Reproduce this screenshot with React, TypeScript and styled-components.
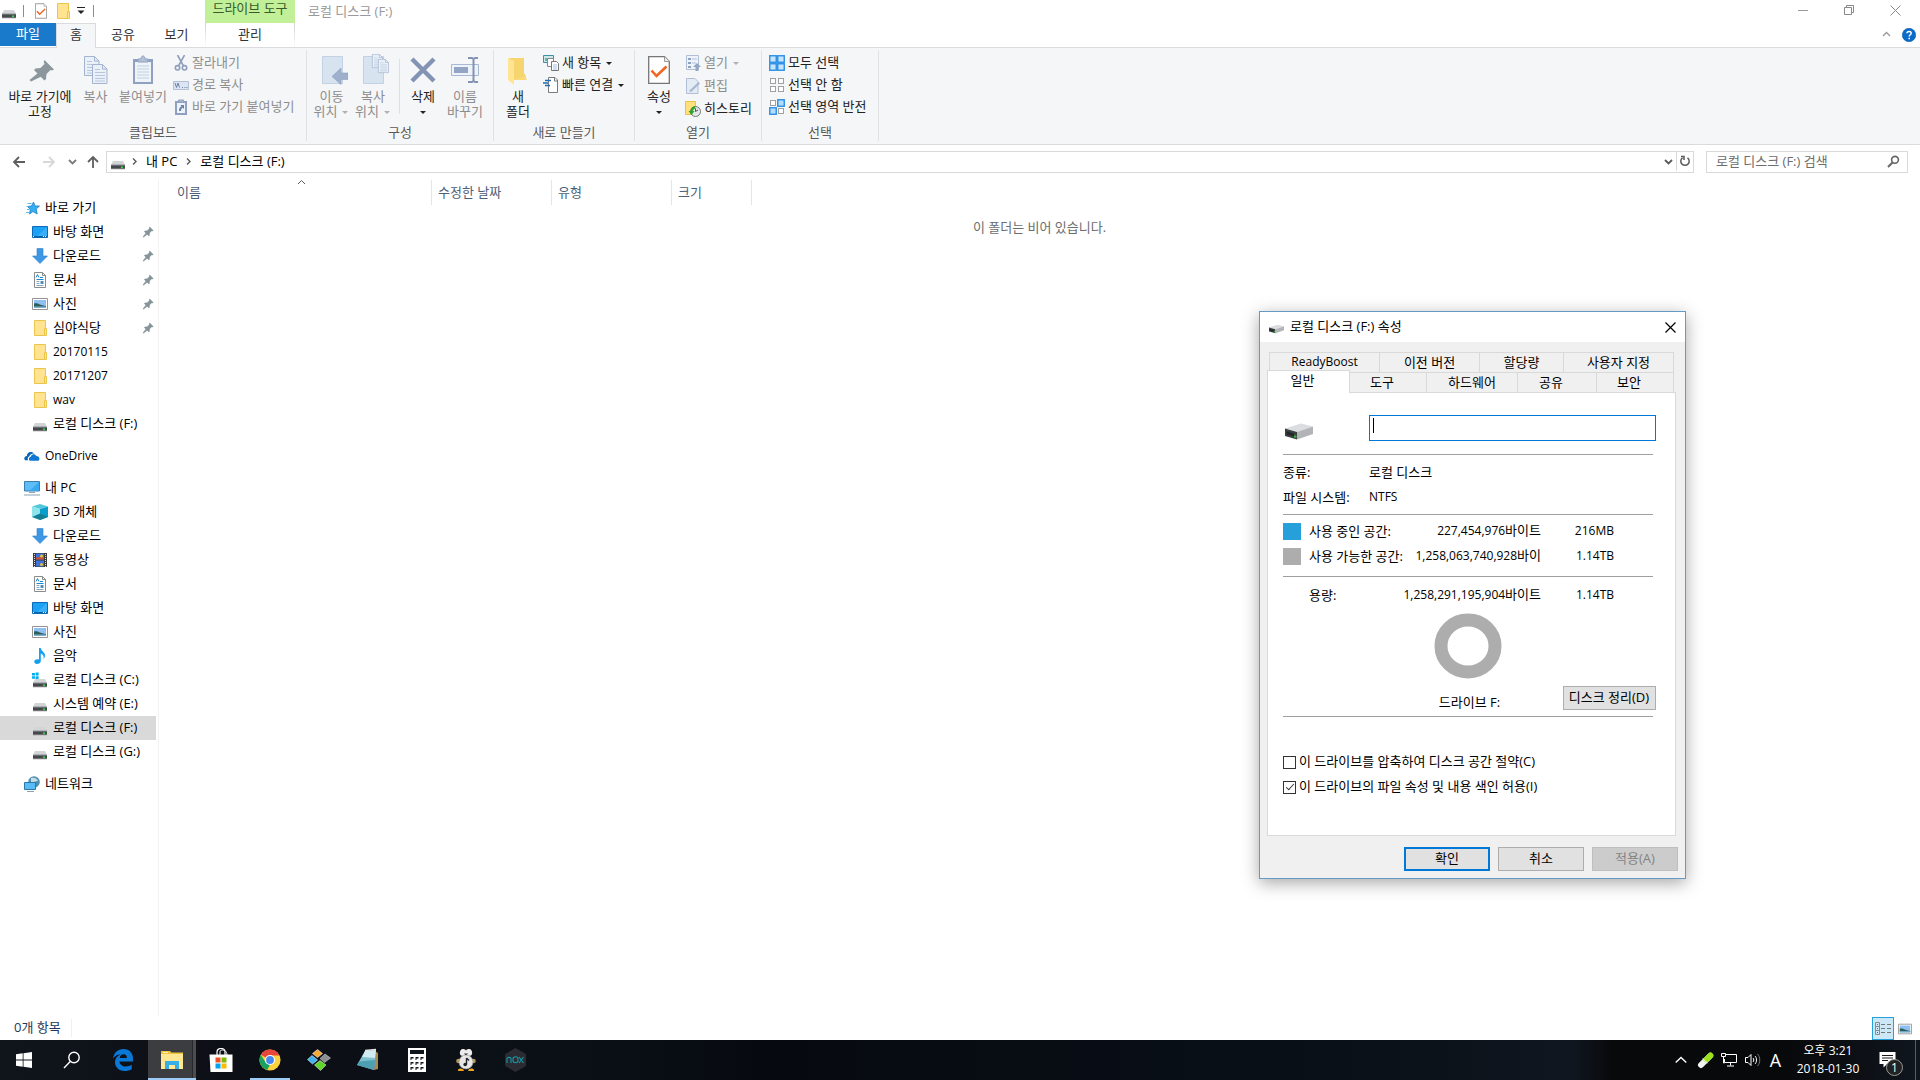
import React from "react";
import styled, { createGlobalStyle, css } from "styled-components";

const font = '"Open Sans", "Noto Sans CJK KR", sans-serif';

const Global = createGlobalStyle`
  *, *::before, *::after { box-sizing: border-box; }
  body { margin: 0; background: #fff; color: #000; font: 13px/16px ${font}; }
  button, input { font: inherit; color: inherit; }
  button { margin: 0; padding: 0; border: 0; background: none; white-space: nowrap; }
  svg { display: block; flex: none; }
`;

/* ---------- page ---------- */

const Desktop = styled.div`
  position: relative;
  min-height: 100vh;
  display: flex;
  flex-direction: column;
`;

const Explorer = styled.main`
  flex: 1;
  display: flex;
  flex-direction: column;
  background: #fff;
`;

/* ---------- title bar ---------- */

const TitleBar = styled.header`
  display: flex;
  height: 23px;
  padding-right: 2px;
`;

const QuickAccess = styled.div`
  width: 205px;
  display: flex;
  align-items: center;
  padding: 0 0 1px 1px;
`;

const QuickButton = styled.button<{ $w: number }>`
  width: ${(p) => p.$w}px;
  height: 20px;
  display: flex;
  align-items: center;
  justify-content: center;
`;

const QuickLine = styled.span`
  width: 1px;
  height: 12px;
  margin: 0 7px 1px 6px;
  background: #8c8c8c;
`;

const ContextTitle = styled.div`
  width: 90px;
  background: #c1f098;
  color: #3a5a2a;
  text-align: center;
`;

const WindowTitle = styled.h1`
  flex: 1;
  margin: 0;
  padding: 3px 0 0 13px;
  font-size: 13px;
  font-weight: 400;
  color: #999;
`;

const WindowButton = styled.button`
  width: 46px;
  height: 20px;
  display: flex;
  align-items: center;
  justify-content: center;
`;

/* ---------- ribbon tabs ---------- */

const TabRow = styled.nav`
  display: flex;
  height: 24px;
`;

const RibbonTab = styled.button<{ $w: number; $kind?: "file" | "active" | "context" }>`
  position: relative;
  width: ${(p) => p.$w}px;
  height: 24px;
  padding-bottom: 3px;
  color: #333;
  ${(p) => p.$kind === "file" && css`height: 23px; background: #1979ca; color: #fff;`}
  ${(p) =>
    p.$kind === "active" &&
    css`
      height: 25px;
      padding-bottom: 4px;
      background: #f5f6f7;
      border: 1px solid #dadbdc;
      border-bottom: 0;
      z-index: 1;
    `}
  ${(p) =>
    p.$kind === "context" &&
    css`
      margin-left: 2px;
      border: 1px solid;
      border-width: 0 1px;
      border-image: linear-gradient(#cfcfcf, #fff) 1;
    `}
`;

const TabTools = styled.div`
  margin-left: auto;
  display: flex;
  align-items: center;
  gap: 11px;
  padding: 0 4px 1px 0;
`;

/* ---------- ribbon ---------- */

const Ribbon = styled.section`
  display: flex;
  height: 98px;
  padding: 2px 0 3px;
  background: #f5f6f7;
  border: 1px solid #dadbdc;
  border-width: 1px 0;
`;

const Group = styled.div<{ $w: number }>`
  width: ${(p) => p.$w}px;
  display: flex;
  flex-direction: column;
  border-right: 1px solid #e1e2e3;
`;

const GroupBody = styled.div`
  flex: 1;
  display: flex;
  padding: 4px 0 0 4px;
`;

const GroupName = styled.div`
  height: 17px;
  text-align: center;
  color: #5a5a5a;
`;

const BigButton = styled.button<{ $w: number }>`
  width: ${(p) => p.$w}px;
  display: flex;
  flex-direction: column;
  align-items: center;
  justify-content: flex-start;
  gap: 3px;
  line-height: 15px;
  color: #222;
  &:disabled { color: #8d8d8d; }
`;

const BigText = styled.span`
  display: flex;
  flex-direction: column;
  align-items: center;
`;

const WithArrow = styled.span`
  display: flex;
  align-items: center;
  justify-content: center;
  gap: 4px;
  min-height: 15px;
`;

const SmallStack = styled.div<{ $pitch: number; $left: number }>`
  display: flex;
  flex-direction: column;
  margin-left: ${(p) => p.$left}px;
  > button { height: ${(p) => p.$pitch}px; padding-bottom: ${(p) => p.$pitch - 17}px; }
`;

const SmallButton = styled.button`
  display: flex;
  align-items: center;
  gap: 4px;
  color: #222;
  &:disabled { color: #8d8d8d; }
  > span { padding-bottom: 2px; margin-left: -1px; }
`;

const BodyLine = styled.span`
  width: 1px;
  height: 55px;
  margin: 5px 3px 0 5px;
  background: #dfe0e1;
`;

/* ---------- address row ---------- */

const AddressRow = styled.div`
  display: flex;
  align-items: center;
  height: 35px;
  padding: 0 12px 2px 4px;
`;

const NavButton = styled.button<{ $w: number }>`
  width: ${(p) => p.$w}px;
  height: 22px;
  display: flex;
  align-items: center;
  justify-content: center;
`;

const AddressBox = styled.div`
  flex: 1;
  height: 22px;
  display: flex;
  align-items: center;
  margin-left: 1px;
  padding-left: 3px;
  border: 1px solid #d9d9d9;
`;

const Crumb = styled.button`
  height: 20px;
  padding: 0 3px 2px;
`;

const Sep = styled.span`
  width: 17px;
  display: flex;
  justify-content: center;
`;

const AddressEnd = styled.div`
  margin-left: auto;
  display: flex;
  > button + button { border-left: 1px solid #d9d9d9; height: 20px; }
`;

const SearchBox = styled.label`
  width: 202px;
  height: 22px;
  display: flex;
  align-items: center;
  margin-left: 12px;
  padding: 0 7px 0 9px;
  border: 1px solid #d9d9d9;
`;

const SearchInput = styled.input`
  flex: 1;
  min-width: 0;
  height: 20px;
  padding: 0 0 2px;
  border: 0;
  outline: 0;
  background: none;
  &::placeholder { color: #6d6d6d; opacity: 1; }
`;

/* ---------- body ---------- */

const Body = styled.div`
  flex: 1;
  display: flex;
`;

const Sidebar = styled.nav`
  width: 159px;
  padding: 16px 2px 0 0;
  border-right: 1px solid #f2f2f2;
`;

const TreeGroup = styled.ul`
  margin: 0 0 8px;
  padding: 0;
  list-style: none;
`;

const TreeItem = styled.li``;

const TreeLink = styled.a<{ $depth: number; $on?: boolean }>`
  height: 24px;
  display: flex;
  align-items: center;
  gap: 5px;
  padding: 0 2px 0 ${(p) => (p.$depth ? 32 : 24)}px;
  color: #000;
  text-decoration: none;
  white-space: nowrap;
  background: ${(p) => (p.$on ? "#d9d9d9" : "transparent")};
  > span { flex: 1; height: 19px; }
`;

const LatinText = styled.span`
  font-size: 12px;
`;

const FilePane = styled.section`
  flex: 1;
  min-width: 0;
`;

const Columns = styled.table`
  table-layout: fixed;
  border-collapse: separate;
  border-spacing: 0;
`;

const Column = styled.th<{ $w: number; $first?: boolean }>`
  width: ${(p) => p.$w}px;
  height: 25px;
  padding: 0 0 2px ${(p) => (p.$first ? 18 : 6)}px;
  border-right: 1px solid #e5e5e5;
  font-weight: 400;
  text-align: left;
  color: #4c607a;
  position: relative;
  svg { position: absolute; top: -2px; left: 138px; }
`;

const Empty = styled.p`
  margin: 14px 0 0;
  text-align: center;
  color: #6d6d6d;
`;

const StatusBar = styled.footer`
  height: 24px;
  display: flex;
  align-items: center;
  padding: 0 4px 0 14px;
  color: #1e395b;
`;

const StatusCount = styled.span`
  padding: 0 10px 2px 0;
  border-right: 1px solid #f0f0f0;
`;

const ViewButtons = styled.div`
  margin-left: auto;
  display: flex;
  align-self: stretch;
  padding-top: 1px;
`;

const ViewButton = styled.button<{ $on?: boolean }>`
  width: 22px;
  height: 23px;
  display: flex;
  align-items: center;
  justify-content: center;
  ${(p) => p.$on && css`background: #cce8f6; border: 1px solid #26a0da;`}
`;

/* ---------- properties dialog ---------- */

const Dialog = styled.section`
  position: absolute;
  left: 1259px;
  top: 311px;
  width: 427px;
  background: #f0f0f0;
  border: 1px solid #649ac6;
  box-shadow: 0 4px 16px rgba(0, 0, 0, 0.35);
`;

const DialogTitle = styled.header`
  height: 30px;
  display: flex;
  align-items: center;
  gap: 6px;
  padding: 0 0 0 9px;
  background: #fff;
  > svg { margin-top: 4px; }
  h2 { margin: 0; padding-bottom: 3px; font-size: 13px; font-weight: 400; }
`;

const CloseButton = styled.button`
  width: 30px;
  height: 29px;
  margin-left: auto;
  display: flex;
  align-items: center;
  justify-content: center;
`;

const TabsBack = styled.div`
  display: flex;
  height: 20px;
  margin: 10px 11px 0 9px;
  border-left: 1px solid #d9d9d9;
`;

const TabsFront = styled.div`
  display: flex;
  height: 20px;
  margin: 0 11px 0 7px;
`;

const DialogTab = styled.button<{ $w: number; $lead?: boolean }>`
  flex: 1 1 ${(p) => p.$w}px;
  border: 1px solid #d9d9d9;
  border-width: 1px 1px 0 0;
  padding: 0 ${(p) => (p.$lead ? 12 : 0)}px 2px 0;
`;

const ActiveTab = styled(DialogTab)`
  position: relative;
  z-index: 1;
  height: 23px;
  margin-top: -2px;
  padding-bottom: 5px;
  border-left-width: 1px;
  background: #fff;
`;

const Panel = styled.div`
  margin: 0 9px 0 7px;
  height: 444px;
  padding: 22px 19px 0 15px;
  background: #fff;
  border: 1px solid #d9d9d9;
`;

const NameRow = styled.div`
  display: flex;
  align-items: center;
  height: 26px;
  padding-left: 2px;
  > svg { margin-top: 6px; }
`;

const NameField = styled.div`
  position: relative;
  margin: 0 0 0 auto;
  width: 287px;
`;

const NameInput = styled.input`
  width: 100%;
  height: 26px;
  padding: 0 4px;
  border: 1px solid #0078d7;
  outline: 0;
  background: #fff;
  display: block;
`;

const Caret = styled.span`
  position: absolute;
  left: 4px;
  top: 3px;
  width: 1px;
  height: 15px;
  background: #000;
`;

const Rule = styled.hr<{ $top: number }>`
  height: 1px;
  margin: ${(p) => p.$top}px 3px 0 0;
  border: 0;
  background: #a0a0a0;
`;

const Facts = styled.dl`
  display: grid;
  grid-template-columns: 86px 1fr;
  grid-auto-rows: 25px;
  align-items: center;
  margin: 4px 0 0;
  dd { margin: 0; }
`;

const Space = styled.table<{ $top: number }>`
  width: 331px;
  margin-top: ${(p) => p.$top}px;
  table-layout: fixed;
  border-collapse: collapse;
  th, td { height: 25px; padding: 0 0 2px; font-weight: 400; white-space: nowrap; text-align: right; }
  th { text-align: left; width: 91px; }
  td:first-child { width: 26px; padding: 0; }
  td:nth-child(3) { width: 141px; }
`;

const Swatch = styled.span<{ $c: string }>`
  display: block;
  width: 18px;
  height: 17px;
  background: ${(p) => p.$c};
`;

const ChartRow = styled.div`
  display: grid;
  grid-template-columns: 1fr 186px 1fr;
  align-items: end;
  margin-top: 5px;
`;

const Chart = styled.figure`
  grid-column: 2;
  margin: 0;
  display: flex;
  flex-direction: column;
  align-items: center;
  gap: 15px;
  figcaption { height: 16px; }
`;

const PushButton = styled.button<{ $w: number; $main?: boolean }>`
  width: ${(p) => p.$w}px;
  height: 24px;
  background: #e1e1e1;
  border: ${(p) => (p.$main ? "2px solid #0078d7" : "1px solid #adadad")};
  padding-bottom: 2px;
  &:disabled { background: #ccc; border-color: #bfbfbf; color: #838383; }
`;

const Checks = styled.div`
  margin-top: 33px;
  display: flex;
  flex-direction: column;
`;

const CheckLabel = styled.label`
  height: 25px;
  display: flex;
  align-items: center;
  gap: 3px;
  span { height: 19px; }
`;

const CheckBox = styled.input`
  appearance: none;
  position: relative;
  width: 13px;
  height: 13px;
  margin: 0;
  border: 1px solid #333;
  background: #fff;
  &:checked::after {
    content: "";
    position: absolute;
    left: 4px;
    top: 0;
    width: 4px;
    height: 8px;
    border: solid #333;
    border-width: 0 1px 1px 0;
    transform: rotate(42deg);
  }
`;

const DialogFooter = styled.footer`
  display: flex;
  justify-content: flex-end;
  gap: 8px;
  padding: 11px 7px 7px 0;
`;

/* ---------- taskbar ---------- */

const Taskbar = styled.nav`
  height: 40px;
  display: flex;
  color: #fff;
  background: linear-gradient(90deg, #10151c 0, #0c0f15 12%, #0b1017 30%, #060a10 40%, #0a1018 70%, #0f161f 82%, #08090b 84%, #08090b 93%, #10161e 100%);
`;

const Shell = styled.div`
  display: flex;
`;

const Apps = styled.div`
  display: flex;
  gap: 1px;
  margin-left: 3px;
`;

const AppButton = styled.button<{ $state?: "open" | "running" }>`
  width: 48px;
  height: 40px;
  display: flex;
  align-items: center;
  justify-content: center;
  ${(p) =>
    p.$state === "open" &&
    css`
      background: linear-gradient(90deg, #3b3d40 44px, #26282b 44px, #26282b 45px, #4a4c4f 45px);
      box-shadow: inset 0 -2px #9ccbf5;
    `}
  ${(p) =>
    p.$state === "running" &&
    css`
      background: linear-gradient(#9ccbf5, #9ccbf5) center bottom / 40px 2px no-repeat;
    `}
`;

const Tray = styled.div`
  margin-left: auto;
  display: flex;
  align-items: center;
`;

const TrayButton = styled.button<{ $w: number }>`
  width: ${(p) => p.$w}px;
  height: 40px;
  display: flex;
  align-items: center;
  justify-content: center;
`;

const Ime = styled.span`
  font-size: 18px;
  line-height: 20px;
`;

const Clock = styled.button`
  width: 82px;
  height: 40px;
  padding-bottom: 1px;
  font-size: 12px;
  line-height: 18px;
`;

const Notify = styled.button`
  position: relative;
  width: 46px;
  height: 40px;
  display: flex;
  align-items: flex-start;
  padding: 12px 0 0 10px;
`;

const Badge = styled.span`
  position: absolute;
  left: 17px;
  top: 19px;
  width: 17px;
  height: 17px;
  border: 1px solid #999;
  border-radius: 50%;
  background: #222;
  font-size: 12px;
  line-height: 15px;
  text-align: center;
`;

const ShowDesktop = styled.button`
  width: 5px;
  height: 40px;
  border-left: 1px solid #5a5d61;
`;

/* ---------- icons ---------- */

const Drive = ({ win }: { win?: boolean }) => (
  <svg width="16" height="16" viewBox="0 0 16 16">
    {win && <path d="M0 1h3v2.500H0zM3.600 .6h3v2.900h-3zM0 4.200h3v2.500H0zM3.600 4.200h3v2.900h-3z" fill="#00adef" />}
    <path d="M3 7h10l2 4H1z" fill="#d2d4d6" />
    <path d="M1 11h14v4H1z" fill="#45494c" />
    <path d="M1 10.500h14v1H1z" fill="#8f9396" />
    <path d="M1 14.500h14v.8H1z" fill="#9a9c9e" />
    <rect x="11" y="12.500" width="2" height="1.500" fill="#2be03a" />
  </svg>
);

const DriveTilt = ({ w, h }: { w: number; h: number }) => (
  <svg width={w} height={h} viewBox="0 0 28 17">
    <path d="M0 5.500 16 .5 28 3.500 12 9z" fill="#dcdde0" />
    <path d="M0 5.500 12 9v7.500L0 13z" fill="#3d4142" />
    <path d="M12 9 28 3.500V11L12 16.500z" fill="#b3b4b7" />
    <path d="M1.500 8.500 9 10.500v3L1.500 11.500z" fill="#23282a" />
    <circle cx="10.200" cy="13.600" r="1.300" fill="#2fb43a" />
  </svg>
);

const Folder = ({ w = 16, h = 16 }: { w?: number; h?: number }) => (
  <svg width={w} height={h} viewBox="0 0 16 16">
    <path d="M2.500.5h11v15h-11z" fill="#ffe391" stroke="#ebc54c" />
    <path d="M12.500 8.500h2v7h-2z" fill="#ffe391" stroke="#ebc54c" />
  </svg>
);

const CheckDoc = ({ w, h }: { w: number; h: number }) => (
  <svg width={w} height={h} viewBox="0 0 22 28">
    <path d="M.7.700h15.800l4.800 4.800v21.800H.7z" fill="#fff" stroke="#767676" strokeWidth="1.300" />
    <path d="M16.500.7v4.800h4.800" fill="#eee" stroke="#999" />
    <path d="m3.500 14.500 5 5.500 10-9.500" fill="none" stroke="#f26522" strokeWidth="2.600" />
  </svg>
);

const Down = ({ c = "#222", line }: { c?: string; line?: boolean }) => (
  <svg width="8" height="8" viewBox="0 0 8 8">
    {line && <path d="M0 0h8v1H0z" fill={c} />}
    <path d={line ? "M.5 3.500h7L4 7z" : "M1 3h6L4 6z"} fill={c} />
  </svg>
);

const Chevron = ({ d, c = "#5a5a5a", w = 1.400 }: { d: "up" | "down" | "right"; c?: string; w?: number }) => (
  <svg width="9" height="9" viewBox="0 0 9 9" fill="none" stroke={c} strokeWidth={w}>
    <path d={{ up: "m1 6 3.500-3.500L8 6", down: "m1 3 3.500 3.500L8 3", right: "m3 1.500 3 3-3 3" }[d]} />
  </svg>
);

const BigPin = () => (
  <svg width="32" height="32" viewBox="0 0 32 32" fill="#8b979c">
    <path d="m20.500 6 9.500 9.500-2 1-1.500-.5-4 4-.5 5-1.500 1.500L10 16l1.500-1.500 5-.5 4-4-.800-2z" />
    <path d="m14 19 3.500 3.500L7 27.500 5.500 26z" />
  </svg>
);

const SmallPin = () => (
  <svg width="12" height="12" viewBox="0 0 12 12" fill="#87959b">
    <path d="m7.500 .5 4 4-1 .7-.7-.1-2 2-.2 2.400-.8.800L2 5.500l.8-.8 2.400-.2 2-2-.1-.8z" />
    <path d="M4 6.700 5.500 8.200 1.500 11.500 .8 10.800z" />
  </svg>
);

const PageShape = ({ x, y }: { x: number; y: number }) => (
  <g transform={`translate(${x} ${y})`}>
    <path d="M.5.500h10l4.500 4.500v14.500H.5z" fill="#e9f0f8" stroke="#a3b4d0" />
    <path d="M10.500.5V5H15" fill="none" stroke="#a3b4d0" />
    <path d="M3 5.500h5M3 8.500h10M3 11.500h10M3 14.500h10M3 17h10" stroke="#b9c7dd" />
  </g>
);

const CopyIcon = () => (
  <svg width="32" height="32" viewBox="0 0 32 32">
    <PageShape x={4} y={2} />
    <PageShape x={12} y={10} />
  </svg>
);

const PasteIcon = () => (
  <svg width="32" height="32" viewBox="0 0 32 32">
    <path d="M6 5h20v25H6z" fill="#8fa0c0" />
    <path d="M8 8h16v20H8z" fill="#eef3f9" />
    <path d="M11 8V5h3c0-4 4-4 4 0h3v3z" fill="#b4c1d6" stroke="#8fa0c0" />
    <path d="M10 12h12M10 15h12M10 18h12M10 21h12M10 24h12" stroke="#c3cfe2" />
  </svg>
);

const CutIcon = () => (
  <svg width="16" height="16" viewBox="0 0 16 16" fill="none" stroke="#8e9fbd">
    <path d="M4.500 0 10.500 11M11.500 0 5.500 11" strokeWidth="1.600" />
    <circle cx="4.500" cy="12.800" r="2.200" strokeWidth="1.600" />
    <circle cx="11.500" cy="12.800" r="2.200" strokeWidth="1.600" />
  </svg>
);

const PathIcon = () => (
  <svg width="16" height="16" viewBox="0 0 16 16">
    <path d="M.5 4.500h15v8H.5z" fill="#dce5f1" stroke="#b3c1d8" />
    <path d="m2 6 1.500 4.500L5 6l1.500 4.500M9 10.500h1M11.500 10.500h1M13.500 10.500h1" fill="none" stroke="#6c82a8" />
  </svg>
);

const PasteLinkIcon = () => (
  <svg width="16" height="16" viewBox="0 0 16 16">
    <path d="M2 2h12v14H2z" fill="#8fa0c0" />
    <path d="M4 4h8v10H4z" fill="#eef3f9" />
    <path d="M5.500 3V1h5v2z" fill="#b4c1d6" stroke="#8fa0c0" />
    <path d="M6 12c0-3 1-4 2.500-4.500L7.500 6H11v4L9.800 8.800C8.500 9.500 8 10.500 8 12z" fill="#6c82a8" />
  </svg>
);

const MoveIcon = () => (
  <svg width="32" height="32" viewBox="0 0 32 32">
    <path d="M6.500 2.500h20v27h-20z" fill="#d8e3f0" stroke="#c3d1e4" />
    <path d="M32 19h-7v-5l-9 8.500 9 8v-5h7z" fill="#9fb0cc" stroke="#8da0c0" strokeWidth=".6" />
  </svg>
);

const CopyToIcon = () => (
  <svg width="32" height="32" viewBox="0 0 32 32">
    <path d="M6.500 2.500h20v27h-20z" fill="#d8e3f0" stroke="#c3d1e4" />
    <g transform="translate(15 0) scale(.7)"><PageShape x={0} y={0} /></g>
    <g transform="translate(21 5) scale(.7)"><PageShape x={0} y={0} /></g>
  </svg>
);

const DeleteIcon = () => (
  <svg width="32" height="32" viewBox="0 0 32 32">
    <path d="m5 5 22 22M27 5 5 27" stroke="#8293b4" strokeWidth="4.400" />
  </svg>
);

const RenameIcon = () => (
  <svg width="32" height="32" viewBox="0 0 32 32">
    <path d="M2.500 10.500h27v11h-27z" fill="#eef3f9" stroke="#a9b9d2" />
    <path d="M5 13h14v6H5z" fill="#93a5c4" />
    <path d="M19 4h4l1.500 1L26 4h3M24.500 5v23M19 28h4l1.500-1L26 28h3" fill="none" stroke="#8293b4" strokeWidth="2" />
  </svg>
);

const NewFolderIcon = () => (
  <svg width="32" height="32" viewBox="0 0 32 32">
    <path d="M7 4h15v15l2 3v4H10z" fill="#f6d56e" />
    <path d="M6 4l6 3v24L6 26z" fill="#ffe492" />
    <path d="M12 26h13l-2-4z" fill="#fbdb78" />
  </svg>
);

const NewItemIcon = () => (
  <svg width="16" height="16" viewBox="0 0 16 16">
    <path d="M.5.500h10v7H.5z" fill="#cfe6ea" stroke="#3d8fa5" />
    <path d="M2 3h6v3H2z" fill="#6db3a4" />
    <path d="M4.500 3.500h6v8h-6z" fill="#fff" stroke="#888" />
    <path d="M8.500 6.500h5l2 2v7h-7z" fill="#fff" stroke="#777" />
    <path d="M10 10h4M10 12h4M10 14h4" stroke="#9ec3e6" />
  </svg>
);

const EasyIcon = () => (
  <svg width="16" height="16" viewBox="0 0 16 16">
    <path d="M5.500.500h6.500L14.500 3v12.500h-9z" fill="#fff" stroke="#7a7a7a" />
    <path d="M11.500.5V4h3" fill="none" stroke="#7a7a7a" />
    <path d="M2 3.500h6M0 6h5M2 8.500h5" stroke="#1f6db4" strokeWidth="1.300" />
  </svg>
);

const OpenIcon = () => (
  <svg width="16" height="16" viewBox="0 0 16 16">
    <path d="M1.500.500h12v14h-12z" fill="#eef3f9" stroke="#b0bfd6" />
    <path d="M3 3h3v2H3zM3 7h3v2H3zM3 11h3v2H3z" fill="#8ea0c0" />
    <path d="M7 4h5M7 8h4" stroke="#b0bfd6" />
    <path d="M12 8l4 4h-2.500v4h-3v-4H8z" fill="#94a6c6" />
  </svg>
);

const EditIcon = () => (
  <svg width="16" height="16" viewBox="0 0 16 16">
    <path d="M1.500.500h8.500l3 3v12h-11.500z" fill="#e3ebf5" stroke="#b0bfd6" />
    <path d="M4 13 13.500 4l1.500 1.500L6 14z" fill="#a7b7d2" />
  </svg>
);

const HistoryIcon = () => (
  <svg width="16" height="16" viewBox="0 0 16 16">
    <path d="M.5.500h10v13H.5z" fill="#ffe07a" stroke="#e9c24a" />
    <circle cx="10.500" cy="10.500" r="5" fill="#e4e7e8" stroke="#777" />
    <path d="M10.500 7.500v3l2.500-1.500" fill="none" stroke="#555" />
    <path d="M10 5.200A5.300 5.300 0 0 0 5.500 10H3.500L6.500 14l3-4H7.800A3 3 0 0 1 10.500 7.500z" fill="#2aa52a" />
  </svg>
);

const Tiles = ({ on, gap }: { on: number[]; gap?: boolean }) => (
  <svg width="16" height="16" viewBox="0 0 16 16">
    {[0, 1, 2, 3].map((i) => {
      const x = (i % 2) * 8;
      const y = i > 1 ? 8 : 0;
      return on.includes(i) ? (
        <rect key={i} x={x + 0.75} y={y + 0.75} width="6.500" height="6.500" fill={gap ? "#b5dcfa" : "#c6e5fc"} stroke="#2b8fe6" strokeWidth="1.400" />
      ) : (
        <rect key={i} x={x + 1.500} y={y + 1.500} width="5" height="5" fill="#fff" stroke="#a0a0a0" />
      );
    })}
  </svg>
);

const Arrow = ({ d, c }: { d: "left" | "right" | "up"; c: string }) => (
  <svg width="14" height="14" viewBox="0 0 14 14" fill="none" stroke={c} strokeWidth="1.800">
    <path d={{ left: "M13 7H2M7 2 2 7l5 5", right: "M1 7h11M7 2l5 5-5 5", up: "M7 13V2M2 7l5-5 5 5" }[d]} />
  </svg>
);

const RefreshIcon = () => (
  <svg width="12" height="12" viewBox="0 0 12 12" fill="none" stroke="#5a5a5a" strokeWidth="1.500">
    <path d="M8.500 2.800A4.200 4.200 0 1 1 3.500 2.800" />
    <path d="M2 1.500h3V5" />
  </svg>
);

const SearchIcon = () => (
  <svg width="13" height="13" viewBox="0 0 13 13" fill="none" stroke="#666" strokeWidth="1.600">
    <circle cx="8" cy="4.800" r="3.400" />
    <path d="M5.500 7.500 1 12" strokeWidth="2" />
  </svg>
);

const StarIcon = () => (
  <svg width="16" height="16" viewBox="0 0 16 16">
    <path d="m9.500 2 1.500 4h4.500l-3.300 3 1 5-4.200-2.500L5.500 14l.8-4.500L3.500 6.500l4-.5z" fill="#34aef4" stroke="#1a7fc4" strokeWidth=".8" />
    <path d="M3.500 3.500h4M2.500 6.500h2M3 9.500h2.500M2 12.500h3" stroke="#5cb8ee" />
  </svg>
);

const DesktopIcon = () => (
  <svg width="16" height="16" viewBox="0 0 16 16">
    <path d="M.5 2.500h15v11H.5z" fill="#1ba1f5" stroke="#0a6cb5" />
    <path d="M15 3 4 13h11z" fill="#3ab0f8" />
    <path d="M1 12h14v1H1z" fill="#0b5f9e" />
    <path d="M1 12h1v1H1zM11 12h1v1h-1zM13 12h1v1h-1z" fill="#fff" />
  </svg>
);

const DownloadIcon = () => (
  <svg width="16" height="16" viewBox="0 0 16 16">
    <path d="M5 .5h6V8h4.500L8 15.500.500 8H5z" fill="#3e97e4" stroke="#2f7fc9" strokeWidth=".6" />
  </svg>
);

const DocIcon = () => (
  <svg width="16" height="16" viewBox="0 0 16 16">
    <path d="M2.500.500h8l3 3v12h-11z" fill="#fff" stroke="#8b8b8b" />
    <path d="M10.500.5v3h3" fill="none" stroke="#8b8b8b" />
    <path d="m4 5.500 1.500-3L7 5.500M8 5.500h3M4.500 7.500h7" fill="none" stroke="#1f86c9" />
    <path d="M4.500 9.500h3M4.500 11.500h3M4.500 13.500h7" stroke="#8aa5b8" />
    <path d="M8.500 9h3v3h-3z" fill="#4d8fb8" />
  </svg>
);

const PhotoIcon = ({ s = 16 }: { s?: number }) => (
  <svg width={s} height={s} viewBox="0 0 16 16">
    <path d="M.5 2.500h15v11H.5z" fill="#fff" stroke="#949494" />
    <path d="M2 4h12v8H2z" fill="#8fc0f2" />
    <path d="M2 7.500c4-1 6 2 12 2.500v1H2z" fill="#2f5f5a" />
    <path d="M2 10.500h12V12H2z" fill="#7fb0cf" />
  </svg>
);

const CloudIcon = () => (
  <svg width="16" height="16" viewBox="0 0 17 16">
    <path d="M1 12.500C-1 9.500 2 8 3 8c0-4 5-6 8-2.500C8 5 6 7 5.500 8.500 4 9 3.500 11 4.500 12.500z" fill="#0364b8" />
    <path d="M6 13c-2-3 .5-4.200 1.300-4.200C7.500 6 11.500 5 13 8c3 0 4.500 3 2.500 5z" fill="#0f78d4" />
  </svg>
);

const PcIcon = () => (
  <svg width="16" height="16" viewBox="0 0 16 16">
    <path d="M.5 1.500h15v9.500H.5z" fill="#5ebcf7" stroke="#3b7fae" />
    <path d="M15 2 6 10.500h9z" fill="#38aaf3" />
    <path d="M5 12.500h6M0 15h16" stroke="#8ba2b4" />
  </svg>
);

const CubeIcon = () => (
  <svg width="16" height="16" viewBox="0 0 16 16">
    <path d="M8 0 16 2.500 8 5 0 2.500z" fill="#52c8d8" />
    <path d="M0 2.500 8 5v11L0 13z" fill="#8fe3ea" />
    <path d="M16 2.500 8 5v11l8-3z" fill="#0a9fcb" />
    <path d="M0 13 8 9.500V16zM16 13 8 9.500V16z" fill="#137f95" />
  </svg>
);

const VideoIcon = () => (
  <svg width="16" height="16" viewBox="0 0 16 16">
    <path d="M1 1h14v14H1z" fill="#3a3a3a" />
    <path d="M4 1.500h8v6H4zM4 8.500h8v6H4z" fill="#3f73d8" />
    <path d="M4 6c3-2 5 0 8-1v2.500H4z" fill="#c94f3b" />
    <circle cx="9.500" cy="4" r="1.500" fill="#e9c22f" />
    <circle cx="9.500" cy="12.500" r="1.500" fill="#e9c22f" />
    <path d="M2.500 2v13M13.500 2v13" stroke="#ddd" strokeDasharray="1 1" />
  </svg>
);

const MusicIcon = () => (
  <svg width="16" height="16" viewBox="0 0 16 16">
    <path d="M7 0h1.800c.2 3 4.200 4 4.200 7.500 0 2-1 3-1.500 3.500 1-3.500-1.500-5-2.700-5.500V13c0 2-2 3-4 3s-2.500-1.500-2.500-2.200C2.300 11.500 5 11 7 11.500z" fill="#14a0f2" />
  </svg>
);

const NetworkIcon = () => (
  <svg width="16" height="16" viewBox="0 0 16 16">
    <circle cx="10" cy="6" r="5.800" fill="#4f8fb4" />
    <path d="M7 2c3-1 6 0 7 3-3 0-5 2-7 1z" fill="#c5dbe6" />
    <path d="M.5 6.500h11v7H.5z" fill="#56bdf6" stroke="#2f77a6" />
    <path d="M3 15.500h7" stroke="#8ba2b4" />
  </svg>
);

const DetailsIcon = () => (
  <svg width="16" height="14" viewBox="0 0 16 14" fill="none">
    <path d="M.5.500h4v12h-4zM.5 4.500h4M.5 8.500h4" stroke="#8b8b8b" />
    <path d="M6 2.500h4M12 2.500h4M6 6.500h4M12 6.500h4M6 10.500h4M12 10.500h4" stroke="#777" />
    <path d="M2 2h1v1H2z" fill="#393" />
    <path d="M2 6h1v1H2z" fill="#36c" />
    <path d="M2 10h1v1H2z" fill="#c33" />
  </svg>
);

const Cross = ({ s, c, w = 1 }: { s: number; c: string; w?: number }) => (
  <svg width={s} height={s} viewBox="0 0 11 11">
    <path d="M.5.5l10 10M10.500.5l-10 10" stroke={c} strokeWidth={w} />
  </svg>
);

const taskIcons: Record<string, React.ReactNode> = {
  start: (
    <svg width="16" height="16" viewBox="0 0 16 16" fill="#fff">
      <path d="M0 2.300 6.700 1.300v6.300H0zM7.500 1.200 16 0v7.600H7.500zM0 8.400h6.700v6.300L0 13.700zM7.500 8.400H16V16l-8.500-1.200z" />
    </svg>
  ),
  search: (
    <svg width="18" height="18" viewBox="0 0 18 18" fill="none" stroke="#fff" strokeWidth="1.400">
      <circle cx="11" cy="6.500" r="5.200" />
      <path d="M7.200 10.500 1 17" />
    </svg>
  ),
  edge: (
    <svg width="20" height="22" viewBox="0 0 20 22">
      <path d="M0 9.500C1 3.500 5 0 10.500 0 16.500 0 20 4 20 10v2.500H6.500c.3 3.500 3 5 6.200 5 2.300 0 4.300-.6 6-1.700v4.400c-2 1.200-4.500 1.800-7 1.800C5.500 22 2 18 2 13.300c0-3.300 1.800-6.200 5.300-7.800C4.800 5.300 2 6.500 0 9.500zM6.700 8.900h7.200c0-2.200-1.200-3.600-3.400-3.600S7 6.900 6.700 8.900z" fill="#0a78d6" />
    </svg>
  ),
  explorer: (
    <svg width="22" height="18" viewBox="0 0 22 18">
      <path d="M0 0h9l1.500 1.500H22V18H0z" fill="#f0c43c" />
      <path d="M0 3h22v15H0z" fill="#ffe794" />
      <path d="M2 1h5v1H2z" fill="#fff3c4" />
      <path d="M4 18v-8h14v8h-4v-4H8v4z" fill="#36aee6" />
    </svg>
  ),
  store: (
    <svg width="24" height="24" viewBox="0 0 24 24">
      <path d="M8 7V4c0-2 1.500-3.500 4-3.500S16 2 16 4v3" fill="none" stroke="#fff" strokeWidth="1.200" />
      <path d="M11 7V4c0-1.500 1-2 2.500-2S18 3 18 7" fill="none" stroke="#fff" strokeWidth="1" />
      <path d="M.5 6.500h23V24H1.500z" fill="#fff" />
      <path d="M6.500 9.500h5v5h-5z" fill="#f25022" />
      <path d="M12.500 9.500h5v5h-5z" fill="#7fba00" />
      <path d="M6.500 15.500h5v5h-5z" fill="#00a4ef" />
      <path d="M12.500 15.500h5v5h-5z" fill="#ffb900" />
    </svg>
  ),
  chrome: (
    <svg width="22" height="22" viewBox="0 0 24 24">
      <circle cx="12" cy="12" r="11.500" fill="#fdd23c" />
      <path d="M12 12 2 6.200A11.500 11.500 0 0 1 22.200 7H12z" fill="#e8453c" />
      <path d="M2 6.200 7.500 15 12 17l-3 6A11.500 11.500 0 0 1 2 6.200z" fill="#1aa260" />
      <circle cx="12" cy="12" r="5.500" fill="#fff" />
      <circle cx="12" cy="12" r="4.300" fill="#4688f1" />
    </svg>
  ),
  tiles: (
    <svg width="24" height="22" viewBox="0 0 24 22">
      <path d="m10.500.5 5 4-5 4-5-4z" fill="#f7a935" stroke="#fff" strokeWidth=".5" />
      <path d="m18 5 5.500 4-6 4.500-4.500-4z" fill="#8d9093" stroke="#ddd" strokeWidth=".5" />
      <path d="m5 6.500 5.500 4.500-5 4L.5 10.500z" fill="#3fb4f0" stroke="#fff" strokeWidth=".5" />
      <path d="m13 11.500 6 4.500-5.500 5.500L7.500 16z" fill="#5fd42b" stroke="#fff" strokeWidth=".5" />
    </svg>
  ),
  notepad: (
    <svg width="24" height="24" viewBox="0 0 24 24">
      <path d="m19 3 3 2v16l-4 1z" fill="#a88a55" />
      <path d="M9 3 20 2l-2 20L1 17z" fill="#7fc0cf" />
      <path d="M9 3 20 2l-1 8-13-1z" fill="#cfeaf0" />
      <path d="M3.500 13.500 19 12l-1 10L1 17z" fill="#4f9fb3" />
      <path d="M9 2.500 20 1.500" stroke="#e6e6e6" strokeWidth="1.500" />
    </svg>
  ),
  calc: (
    <svg width="18" height="24" viewBox="0 0 18 24">
      <path d="M0 0h18v24H0z" fill="#fff" />
      <path d="M2 2h14v4H2z" fill="#10141b" />
      <path d="M2.500 9h3v1.500h-2v1.500h-1zM7.500 9h3v1.500h-2v1.500h-1zM12.500 9h3v1.500h-2v1.500h-1zM2.500 14h3v1.500h-2v1.500h-1zM7.500 14h3v1.500h-2v1.500h-1zM12.500 14h3v1.500h-2v1.500h-1zM2.500 19h3v1.500h-2v1.500h-1zM7.500 19h3v1.500h-2v1.500h-1zM12.500 19h3v1.500h-2v1.500h-1z" fill="#10141b" />
    </svg>
  ),
  penguin: (
    <svg width="20" height="24" viewBox="0 0 20 24">
      <path d="M6 1h8l2 4-1 5H5L4 5z" fill="#2b2b2b" />
      <path d="M4.500 2.500C6 0 9 1 10 2.500 11 1 14 0 15.500 2.500 17 5 16 8 13 8H7C4 8 3 5 4.500 2.500z" fill="#ececec" />
      <path d="M8 5.500h4l-2 2.500z" fill="#333" />
      <circle cx="2.500" cy="13" r="2.300" fill="#b8965c" />
      <circle cx="17.500" cy="13" r="2.300" fill="#b8965c" />
      <circle cx="10" cy="14" r="7" fill="#e6e6e6" stroke="#999" strokeWidth=".6" />
      <path d="M10.500 10v6.500M10.500 10l2.500 2.500" stroke="#222" strokeWidth="1.400" fill="none" />
      <circle cx="9.200" cy="16.500" r="1.800" fill="#222" />
      <path d="M2 22c1-2 5-2 6 1H2zM18 22c-1-2-5-2-6 1h6z" fill="#f2a51e" />
    </svg>
  ),
  nox: (
    <svg width="21" height="24" viewBox="0 0 21 24">
      <path d="M10.500 0 21 6v12l-10.500 6L0 18V6z" fill="#2b2c33" />
      <path d="M2 15v-4.500c0-1.500 4-1.500 4 0V15M8 11c0-3 5-3 5 0v1.500c0 3-5 3-5 0zM14 9l4.500 6M18.500 9 14 15" fill="none" stroke="#169aa8" strokeWidth="1.100" />
    </svg>
  ),
};

/* ---------- data ---------- */

type Node = { name: string; icon: React.ReactNode; pin?: boolean; on?: boolean };

const groups: Node[][] = [
  [
    { name: "바로 가기", icon: <StarIcon /> },
    { name: "바탕 화면", icon: <DesktopIcon />, pin: true },
    { name: "다운로드", icon: <DownloadIcon />, pin: true },
    { name: "문서", icon: <DocIcon />, pin: true },
    { name: "사진", icon: <PhotoIcon />, pin: true },
    { name: "심야식당", icon: <Folder />, pin: true },
    { name: "20170115", icon: <Folder /> },
    { name: "20171207", icon: <Folder /> },
    { name: "wav", icon: <Folder /> },
    { name: "로컬 디스크 (F:)", icon: <Drive /> },
  ],
  [{ name: "OneDrive", icon: <CloudIcon /> }],
  [
    { name: "내 PC", icon: <PcIcon /> },
    { name: "3D 개체", icon: <CubeIcon /> },
    { name: "다운로드", icon: <DownloadIcon /> },
    { name: "동영상", icon: <VideoIcon /> },
    { name: "문서", icon: <DocIcon /> },
    { name: "바탕 화면", icon: <DesktopIcon /> },
    { name: "사진", icon: <PhotoIcon /> },
    { name: "음악", icon: <MusicIcon /> },
    { name: "로컬 디스크 (C:)", icon: <Drive win /> },
    { name: "시스템 예약 (E:)", icon: <Drive /> },
    { name: "로컬 디스크 (F:)", icon: <Drive />, on: true },
    { name: "로컬 디스크 (G:)", icon: <Drive /> },
  ],
  [{ name: "네트워크", icon: <NetworkIcon /> }],
];

const apps: { id: string; label: string; state?: "open" | "running" }[] = [
  { id: "edge", label: "Edge" },
  { id: "explorer", label: "파일 탐색기", state: "open" },
  { id: "store", label: "Store" },
  { id: "chrome", label: "Chrome", state: "running" },
  { id: "tiles", label: "Tiles" },
  { id: "notepad", label: "메모장" },
  { id: "calc", label: "계산기" },
  { id: "penguin", label: "Player" },
  { id: "nox", label: "Nox" },
];

const isLatin = (s: string) => /^[\x20-\x7e]+$/.test(s);

/* ---------- parts ---------- */

const Big = ({ w, icon, lines, arrow, off }: { w: number; icon: React.ReactNode; lines: string[]; arrow?: boolean; off?: boolean }) => (
  <BigButton $w={w} disabled={off}>
    {icon}
    <BigText>
      {lines.map((t, i) => (
        <WithArrow key={t}>
          {t}
          {arrow && i === 1 && <Down c={off ? "#b0b0b0" : "#222"} />}
        </WithArrow>
      ))}
      {arrow && lines.length === 1 && (
        <WithArrow>
          <Down />
        </WithArrow>
      )}
    </BigText>
  </BigButton>
);

const Small = ({ icon, text, arrow, off }: { icon: React.ReactNode; text: string; arrow?: boolean; off?: boolean }) => (
  <SmallButton disabled={off}>
    {icon}
    <span>{text}</span>
    {arrow && <Down c={off ? "#b0b0b0" : "#222"} />}
  </SmallButton>
);

const PropertiesDialog = () => (
  <Dialog role="dialog" aria-label="로컬 디스크 (F:) 속성">
    <DialogTitle>
      <DriveTilt w={15} h={10} />
      <h2>로컬 디스크 (F:) 속성</h2>
      <CloseButton aria-label="닫기">
        <Cross s={11} c="#000" w={1.2} />
      </CloseButton>
    </DialogTitle>
    <TabsBack>
      <DialogTab $w={110}><LatinText>ReadyBoost</LatinText></DialogTab>
      <DialogTab $w={100}>이전 버전</DialogTab>
      <DialogTab $w={84}>할당량</DialogTab>
      <DialogTab $w={110}>사용자 지정</DialogTab>
    </TabsBack>
    <TabsFront>
      <ActiveTab $w={83} $lead>일반</ActiveTab>
      <DialogTab $w={77} $lead>도구</DialogTab>
      <DialogTab $w={91}>하드웨어</DialogTab>
      <DialogTab $w={79} $lead>공유</DialogTab>
      <DialogTab $w={77} $lead>보안</DialogTab>
    </TabsFront>
    <Panel>
      <NameRow>
        <DriveTilt w={28} h={17} />
        <NameField>
          <NameInput aria-label="볼륨 이름" defaultValue="" />
          <Caret />
        </NameField>
      </NameRow>
      <Rule $top={13} />
      <Facts>
        <dt>종류:</dt>
        <dd>로컬 디스크</dd>
        <dt>파일 시스템:</dt>
        <dd><LatinText>NTFS</LatinText></dd>
      </Facts>
      <Rule $top={5} />
      <Space $top={4}>
        <tbody>
          <tr>
            <td><Swatch $c="#26a0da" /></td>
            <th scope="row">사용 중인 공간:</th>
            <td><LatinText>227,454,976</LatinText>바이트</td>
            <td><LatinText>216MB</LatinText></td>
          </tr>
          <tr>
            <td><Swatch $c="#adadad" /></td>
            <th scope="row">사용 가능한 공간:</th>
            <td><LatinText>1,258,063,740,928</LatinText>바이</td>
            <td><LatinText>1.14TB</LatinText></td>
          </tr>
        </tbody>
      </Space>
      <Rule $top={7} />
      <Space $top={6}>
        <tbody>
          <tr>
            <td />
            <th scope="row">용량:</th>
            <td><LatinText>1,258,291,195,904</LatinText>바이트</td>
            <td><LatinText>1.14TB</LatinText></td>
          </tr>
        </tbody>
      </Space>
      <ChartRow>
        <Chart>
          <svg width="72" height="66" viewBox="0 0 72 66">
            <ellipse cx="34" cy="33" rx="27" ry="26" fill="none" stroke="#adadad" strokeWidth="13" />
          </svg>
          <figcaption>드라이브 F:</figcaption>
        </Chart>
        <PushButton $w={93}>디스크 정리(D)</PushButton>
      </ChartRow>
      <Rule $top={6} />
      <Checks>
        <CheckLabel>
          <CheckBox type="checkbox" />
          <span>이 드라이브를 압축하여 디스크 공간 절약(C)</span>
        </CheckLabel>
        <CheckLabel>
          <CheckBox type="checkbox" defaultChecked />
          <span>이 드라이브의 파일 속성 및 내용 색인 허용(I)</span>
        </CheckLabel>
      </Checks>
    </Panel>
    <DialogFooter>
      <PushButton $w={86} $main>확인</PushButton>
      <PushButton $w={86}>취소</PushButton>
      <PushButton $w={86} disabled>적용(A)</PushButton>
    </DialogFooter>
  </Dialog>
);

export default function App() {
  return (
    <Desktop>
      <Global />
      <Explorer>
        <TitleBar>
          <QuickAccess>
            <Drive />
            <QuickLine />
            <QuickButton $w={20} aria-label="속성"><CheckDoc w={12} h={16} /></QuickButton>
            <QuickButton $w={24} aria-label="새 폴더"><Folder /></QuickButton>
            <QuickButton $w={12} aria-label="사용자 지정"><Down line /></QuickButton>
            <QuickLine />
          </QuickAccess>
          <ContextTitle>드라이브 도구</ContextTitle>
          <WindowTitle>로컬 디스크 (F:)</WindowTitle>
          <WindowButton aria-label="최소화">
            <svg width="10" height="10"><path d="M0 5.500h10" stroke="#999" /></svg>
          </WindowButton>
          <WindowButton aria-label="이전 크기로">
            <svg width="10" height="10" fill="none" stroke="#888"><path d="M.5 2.500h7v7h-7zM2.500 2.500v-2h7v7h-2" /></svg>
          </WindowButton>
          <WindowButton aria-label="닫기"><Cross s={11} c="#888" /></WindowButton>
        </TitleBar>
        <TabRow>
          <RibbonTab $w={56} $kind="file">파일</RibbonTab>
          <RibbonTab $w={40} $kind="active">홈</RibbonTab>
          <RibbonTab $w={54}>공유</RibbonTab>
          <RibbonTab $w={53}>보기</RibbonTab>
          <RibbonTab $w={90} $kind="context">관리</RibbonTab>
          <TabTools>
            <Chevron d="up" c="#999" />
            <svg width="14" height="14" viewBox="0 0 14 14">
              <circle cx="7" cy="7" r="6.700" fill="#0b6cc9" stroke="#0a58a6" strokeWidth=".6" />
              <path d="M5 5.300C5 2.700 9.200 2.800 9.200 5.200 9.200 6.700 7.200 6.800 7.200 8.500M7.200 9.700v1.500" fill="none" stroke="#fff" strokeWidth="1.500" />
            </svg>
          </TabTools>
        </TabRow>
        <Ribbon>
          <Group $w={307}>
            <GroupBody>
              <Big w={72} icon={<BigPin />} lines={["바로 가기에", "고정"]} />
              <Big w={39} icon={<CopyIcon />} lines={["복사"]} off />
              <Big w={56} icon={<PasteIcon />} lines={["붙여넣기"]} off />
              <SmallStack $pitch={22} $left={2}>
                <Small icon={<CutIcon />} text="잘라내기" off />
                <Small icon={<PathIcon />} text="경로 복사" off />
                <Small icon={<PasteLinkIcon />} text="바로 가기 붙여넣기" off />
              </SmallStack>
            </GroupBody>
            <GroupName>클립보드</GroupName>
          </Group>
          <Group $w={187}>
            <GroupBody>
              <Big w={41} icon={<MoveIcon />} lines={["이동", "위치"]} arrow off />
              <Big w={42} icon={<CopyToIcon />} lines={["복사", "위치"]} arrow off />
              <BodyLine />
              <Big w={40} icon={<DeleteIcon />} lines={["삭제"]} arrow />
              <Big w={44} icon={<RenameIcon />} lines={["이름", "바꾸기"]} off />
            </GroupBody>
            <GroupName>구성</GroupName>
          </Group>
          <Group $w={141}>
            <GroupBody>
              <Big w={40} icon={<NewFolderIcon />} lines={["새", "폴더"]} />
              <SmallStack $pitch={22} $left={5}>
                <Small icon={<NewItemIcon />} text="새 항목" arrow />
                <Small icon={<EasyIcon />} text="빠른 연결" arrow />
              </SmallStack>
            </GroupBody>
            <GroupName>새로 만들기</GroupName>
          </Group>
          <Group $w={127}>
            <GroupBody>
              <Big
                w={40}
                icon={<svg width="32" height="32"><g transform="translate(5 2)"><CheckDoc w={22} h={28} /></g></svg>}
                lines={["속성"]}
                arrow
              />
              <SmallStack $pitch={23} $left={6}>
                <Small icon={<OpenIcon />} text="열기" arrow off />
                <Small icon={<EditIcon />} text="편집" off />
                <Small icon={<HistoryIcon />} text="히스토리" />
              </SmallStack>
            </GroupBody>
            <GroupName>열기</GroupName>
          </Group>
          <Group $w={117}>
            <GroupBody>
              <SmallStack $pitch={22} $left={3}>
                <Small icon={<Tiles on={[0, 1, 2, 3]} />} text="모두 선택" />
                <Small icon={<Tiles on={[]} />} text="선택 안 함" />
                <Small icon={<Tiles on={[1, 2]} gap />} text="선택 영역 반전" />
              </SmallStack>
            </GroupBody>
            <GroupName>선택</GroupName>
          </Group>
        </Ribbon>
        <AddressRow>
          <NavButton $w={30} aria-label="뒤로"><Arrow d="left" c="#5f5f5f" /></NavButton>
          <NavButton $w={30} aria-label="앞으로"><Arrow d="right" c="#d8d8d8" /></NavButton>
          <NavButton $w={16} aria-label="최근 위치"><Chevron d="down" c="#7a7a7a" w={1.8} /></NavButton>
          <NavButton $w={25} aria-label="위로"><Arrow d="up" c="#5f5f5f" /></NavButton>
          <AddressBox>
            <Drive />
            <Sep><Chevron d="right" /></Sep>
            <Crumb>내 PC</Crumb>
            <Sep><Chevron d="right" /></Sep>
            <Crumb>로컬 디스크 (F:)</Crumb>
            <AddressEnd>
              <NavButton $w={15} aria-label="이전 위치"><Chevron d="down" w={1.8} /></NavButton>
              <NavButton $w={17} aria-label="새로 고침"><RefreshIcon /></NavButton>
            </AddressEnd>
          </AddressBox>
          <SearchBox>
            <SearchInput aria-label="검색" placeholder="로컬 디스크 (F:) 검색" />
            <SearchIcon />
          </SearchBox>
        </AddressRow>
        <Body>
          <Sidebar>
            {groups.map((g, gi) => (
              <TreeGroup key={gi}>
                {g.map((n, i) => (
                  <TreeItem key={n.name}>
                    <TreeLink href="#" $depth={i ? 1 : 0} $on={n.on}>
                      {n.icon}
                      <span>{isLatin(n.name) ? <LatinText>{n.name}</LatinText> : n.name}</span>
                      {n.pin && <SmallPin />}
                    </TreeLink>
                  </TreeItem>
                ))}
              </TreeGroup>
            ))}
          </Sidebar>
          <FilePane>
            <Columns>
              <thead>
                <tr>
                  <Column $w={273} $first>이름<Chevron d="up" w={1} /></Column>
                  <Column $w={120}>수정한 날짜</Column>
                  <Column $w={120}>유형</Column>
                  <Column $w={80}>크기</Column>
                </tr>
              </thead>
            </Columns>
            <Empty>이 폴더는 비어 있습니다.</Empty>
          </FilePane>
        </Body>
        <StatusBar>
          <StatusCount>0개 항목</StatusCount>
          <ViewButtons>
            <ViewButton $on aria-label="자세히"><DetailsIcon /></ViewButton>
            <ViewButton aria-label="큰 아이콘"><PhotoIcon s={14} /></ViewButton>
          </ViewButtons>
        </StatusBar>
      </Explorer>
      <Taskbar>
        <Shell>
          <AppButton aria-label="시작">{taskIcons.start}</AppButton>
          <AppButton aria-label="검색">{taskIcons.search}</AppButton>
        </Shell>
        <Apps>
          {apps.map((a) => (
            <AppButton key={a.id} $state={a.state} aria-label={a.label}>
              {taskIcons[a.id]}
            </AppButton>
          ))}
        </Apps>
        <Tray>
          <TrayButton $w={24} aria-label="숨겨진 아이콘">
            <svg width="12" height="8" fill="none" stroke="#fff" strokeWidth="1.400"><path d="m.7 6.500 5.300-5 5.300 5" /></svg>
          </TrayButton>
          <TrayButton $w={24} aria-label="Pill">
            <svg width="17" height="17" viewBox="0 0 17 17" strokeLinecap="round" strokeWidth="6">
              <path d="M4 13 13 4" stroke="#f2f2f2" />
              <path d="M9.500 7.500 13.500 3.500" stroke="#9be01c" />
              <path d="m6 6.800 4.200 4.200" stroke="#fff" strokeWidth="1" />
            </svg>
          </TrayButton>
          <TrayButton $w={24} aria-label="네트워크">
            <svg width="16" height="14" viewBox="0 0 16 14" fill="none" stroke="#fff">
              <path d="M4.500 1.500h11v8h-12V6M9.500 9.500v3M6 13h7" />
              <path d="M.5.500h4v3h-4zM2.500 3.500V10h1" />
            </svg>
          </TrayButton>
          <TrayButton $w={23} aria-label="볼륨">
            <svg width="16" height="14" viewBox="0 0 16 14" fill="none" stroke="#fff">
              <path d="M.5 4.500H3l3-3v11l-3-3H.5zM8 5c1 1 1 3 0 4M10 3c2 2 2 6 0 8" />
              <path d="M12.500 1c3 3 3 9 0 12" stroke="#777" />
            </svg>
          </TrayButton>
          <TrayButton $w={23} aria-label="입력기"><Ime>A</Ime></TrayButton>
          <Clock>오후 3:21<br />2018-01-30</Clock>
          <Notify aria-label="알림">
            <svg width="17" height="16" viewBox="0 0 17 16">
              <path d="M.5 0h16v12H8l-3.500 3.500V12h-4z" fill="#fff" />
              <path d="M3 3.500h11M3 6h11M3 8.500h6" stroke="#15181c" />
            </svg>
            <Badge>1</Badge>
          </Notify>
          <ShowDesktop aria-label="바탕 화면 보기" />
        </Tray>
      </Taskbar>
      <PropertiesDialog />
    </Desktop>
  );
}
